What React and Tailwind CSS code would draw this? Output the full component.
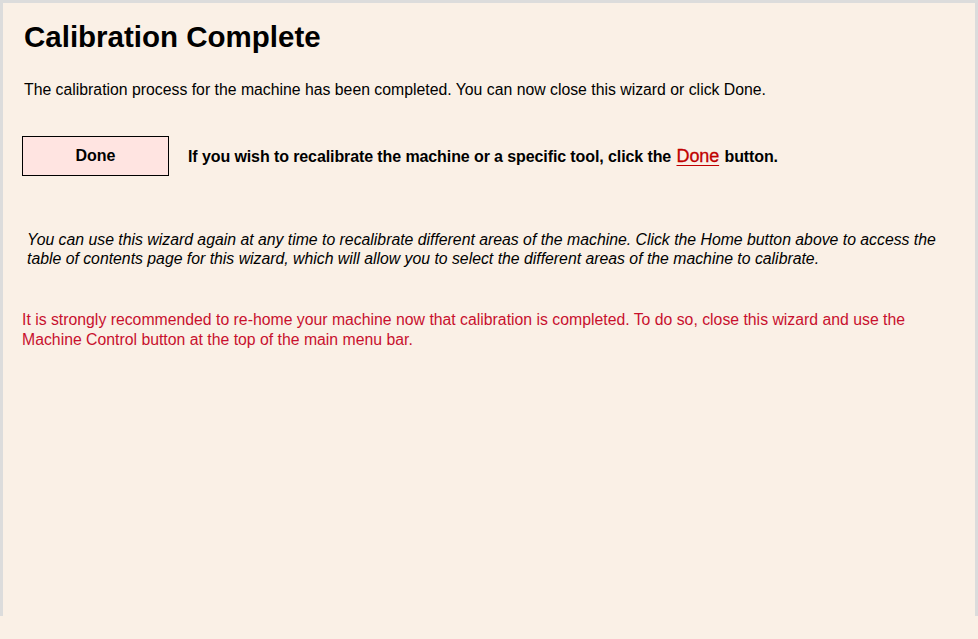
import React from 'react';

export default function App() {
  return (
    <div className="w-[978px] h-[639px] bg-[#faf0e6] font-['Liberation_Sans',Arial,sans-serif] text-black">
      <div className="h-[616px] border-t-[3px] border-l-[3px] border-r-[3px] border-[#dcdcdc] pl-[21px] pr-6">
        <h1 className="pt-[18px] text-[29.5px] font-bold leading-8">Calibration Complete</h1>

        <p className="mt-[28px] text-[15.8px] leading-[18px]">
          The calibration process for the machine has been completed. You can now close this wizard or click Done.
        </p>

        <div className="mt-[37px] flex items-center">
          <button className="w-[147px] h-10 ml-[-2px] border border-black bg-[#ffe4e1] text-[16px] font-bold">Done</button>
          <p className="ml-[19px] text-[16px] font-bold tracking-[-0.1px]">
            If you wish to recalibrate the machine or a specific tool, click the{' '}
            <span className="mx-[1px] text-[18px] font-normal text-[#c00000] underline underline-offset-[3px] [-webkit-text-stroke:0.3px_#c00000]">Done</span> button.
          </p>
        </div>

        <p className="mt-[54px] ml-[3px] text-[15.8px] italic leading-[19px]">
          You can use this wizard again at any time to recalibrate different areas of the machine. Click the Home button above to access the table of contents page for this wizard, which will allow you to select the different areas of the machine to calibrate.
        </p>

        <p className="mt-[42px] ml-[-2px] text-[15.8px] leading-5 text-[#c8102e]">
          It is strongly recommended to re-home your machine now that calibration is completed. To do so, close this wizard and use the Machine Control button at the top of the main menu bar.
        </p>
      </div>
    </div>
  );
}
